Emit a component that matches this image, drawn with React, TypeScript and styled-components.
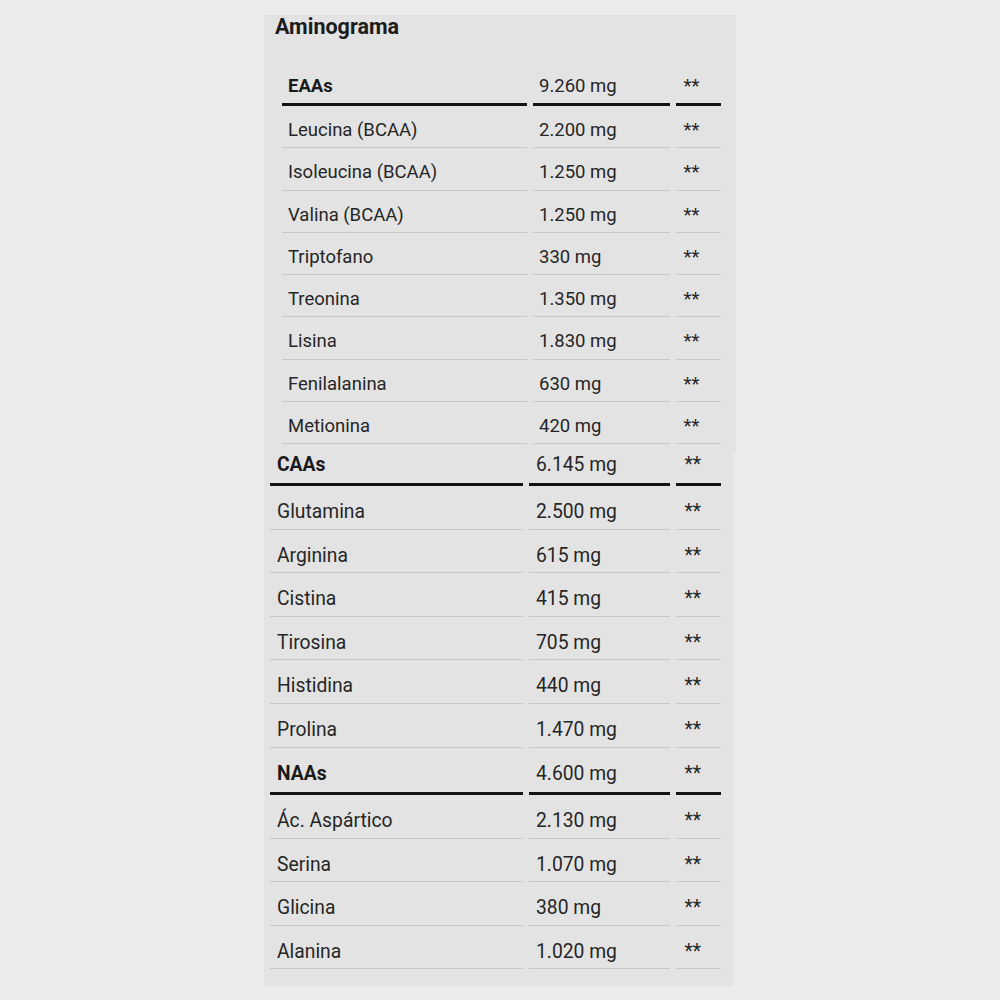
import React from "react";
import styled, { createGlobalStyle } from "styled-components";

const Global = createGlobalStyle`
  html, body { margin: 0; padding: 0; background: #ebebeb; }
  body { font-family: Roboto, "Liberation Sans", Arial, sans-serif; color: #222; }
`;

const Page = styled.div`
  width: 1000px;
  height: 1000px;
  background: #ebebeb;
  padding: 15px 0 0 264px;
  box-sizing: border-box;
  display: flex;
  flex-direction: column;
`;

const Panel = styled.section<{ $w: number; $pad: string }>`
  width: ${(p) => p.$w}px;
  background: #e3e3e3;
  padding: ${(p) => p.$pad};
  box-sizing: border-box;
  display: flex;
  flex-direction: column;
`;

const Title = styled.h2`
  margin: 1px 0 25px -7px;
  font-size: 21.5px;
  line-height: 22px;
  font-weight: 700;
  color: #1c1c1c;
`;

const Grid = styled.div<{ $cols: string }>`
  display: grid;
  grid-template-columns: ${(p) => p.$cols};
  column-gap: 6px;
`;

const Cell = styled.div<{
  $h: number;
  $pt: number;
  $thick?: boolean;
  $bold?: boolean;
  $fs: number;
  $pl: number;
}>`
  height: ${(p) => p.$h}px;
  box-sizing: border-box;
  padding: ${(p) => p.$pt}px 0 0 ${(p) => p.$pl}px;
  border-bottom: ${(p) => (p.$thick ? "3px solid #141414" : "1px solid #c7c7c7")};
  font-size: ${(p) => p.$fs}px;
  line-height: 22px;
  font-weight: ${(p) => (p.$bold ? 700 : 400)};
  color: ${(p) => (p.$bold ? "#1a1a1a" : "#262626")};
  white-space: nowrap;
`;

type Row = [string, string];

const eaas: Row[] = [
  ["Leucina (BCAA)", "2.200 mg"],
  ["Isoleucina (BCAA)", "1.250 mg"],
  ["Valina (BCAA)", "1.250 mg"],
  ["Triptofano", "330 mg"],
  ["Treonina", "1.350 mg"],
  ["Lisina", "1.830 mg"],
  ["Fenilalanina", "630 mg"],
  ["Metionina", "420 mg"],
];

const caas: Row[] = [
  ["Glutamina", "2.500 mg"],
  ["Arginina", "615 mg"],
  ["Cistina", "415 mg"],
  ["Tirosina", "705 mg"],
  ["Histidina", "440 mg"],
  ["Prolina", "1.470 mg"],
];

const naas: Row[] = [
  ["Ác. Aspártico", "2.130 mg"],
  ["Serina", "1.070 mg"],
  ["Glicina", "380 mg"],
  ["Alanina", "1.020 mg"],
];

type RowProps = {
  name: string;
  value: string;
  h: number;
  pt: number;
  fs: number;
  pl: number;
  header?: boolean;
};

const TableRow = ({ name, value, h, pt, fs, pl, header }: RowProps) => (
  <>
    <Cell $h={h} $pt={pt} $fs={fs} $pl={pl} $thick={header} $bold={header}>
      {name}
    </Cell>
    <Cell $h={h} $pt={pt} $fs={fs} $pl={pl} $thick={header}>
      {value}
    </Cell>
    <Cell $h={h} $pt={pt} $fs={fs} $pl={pl + 1.5} $thick={header}>
      **
    </Cell>
  </>
);

export default function App() {
  return (
    <>
      <Global />
      <Page>
        <Panel $w={472} $pad="0 0 7.6px 18px">
          <Title>Aminograma</Title>
          <Grid $cols="245px 137px 45px">
            <TableRow name="EAAs" value="9.260 mg" h={43} pt={11.5} fs={18.5} pl={6} header />
            {eaas.map(([n, v]) => (
              <TableRow key={n} name={n} value={v} h={42.3} pt={13} fs={18.5} pl={6} />
            ))}
          </Grid>
        </Panel>
        <Panel $w={469} $pad="0 0 16.6px 6px">
          <Grid $cols="253px 141px 45px">
            <TableRow name="CAAs" value="6.145 mg" h={34} pt={2.5} fs={19.3} pl={7} header />
            {caas.map(([n, v]) => (
              <TableRow key={n} name={n} value={v} h={43.6} pt={15} fs={19.3} pl={7} />
            ))}
            <TableRow name="NAAs" value="4.600 mg" h={47.4} pt={15} fs={19.3} pl={7} header />
            {naas.map(([n, v]) => (
              <TableRow key={n} name={n} value={v} h={43.6} pt={15} fs={19.3} pl={7} />
            ))}
          </Grid>
        </Panel>
      </Page>
    </>
  );
}
